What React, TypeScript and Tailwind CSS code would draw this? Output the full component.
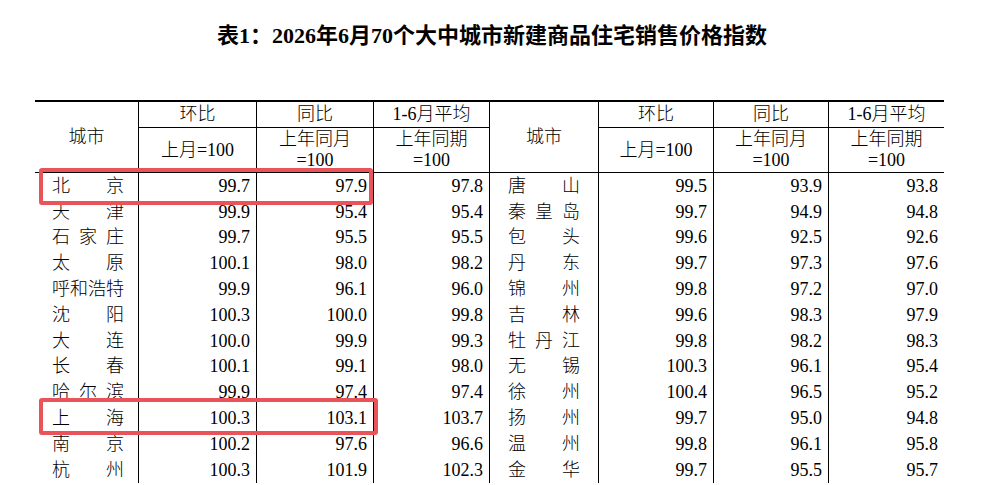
import React from "react";

const left: [string, string, string, string][] = [
  ["北京", "99.7", "97.9", "97.8"],
  ["天津", "99.9", "95.4", "95.4"],
  ["石家庄", "99.7", "95.5", "95.5"],
  ["太原", "100.1", "98.0", "98.2"],
  ["呼和浩特", "99.9", "96.1", "96.0"],
  ["沈阳", "100.3", "100.0", "99.8"],
  ["大连", "100.0", "99.9", "99.3"],
  ["长春", "100.1", "99.1", "98.0"],
  ["哈尔滨", "99.9", "97.4", "97.4"],
  ["上海", "100.3", "103.1", "103.7"],
  ["南京", "100.2", "97.6", "96.6"],
  ["杭州", "100.3", "101.9", "102.3"],
];

const right: [string, string, string, string][] = [
  ["唐山", "99.5", "93.9", "93.8"],
  ["秦皇岛", "99.7", "94.9", "94.8"],
  ["包头", "99.6", "92.5", "92.6"],
  ["丹东", "99.7", "97.3", "97.6"],
  ["锦州", "99.8", "97.2", "97.0"],
  ["吉林", "99.6", "98.3", "97.9"],
  ["牡丹江", "99.8", "98.2", "98.3"],
  ["无锡", "100.3", "96.1", "95.4"],
  ["徐州", "100.4", "96.5", "95.2"],
  ["扬州", "99.7", "95.0", "94.8"],
  ["温州", "99.8", "96.1", "95.8"],
  ["金华", "99.7", "95.5", "95.7"],
];

const font = "font-['Liberation_Serif','Noto_Sans_CJK_SC',serif]";

function City({ name, pad }: { name: string; pad: string }) {
  return (
    <div className={`flex h-full items-center ${pad}`}>
      <div className="flex w-[72px] justify-between">
        {name.split("").map((c, i) => (
          <span key={i}>{c}</span>
        ))}
      </div>
    </div>
  );
}

function Num({ v }: { v: string }) {
  return <div className="flex items-center justify-end border-l border-black pr-[6px]">{v}</div>;
}

function HeaderHalf({ first }: { first: boolean }) {
  const col = first
    ? ["col-start-1", "col-start-2", "col-start-3", "col-start-4"]
    : ["col-start-5", "col-start-6", "col-start-7", "col-start-8"];
  return (
    <>
      <div className={`${col[0]} row-span-2 row-start-1 flex items-center justify-center ${first ? "" : "border-l border-black"}`}>
        城市
      </div>
      <div className={`${col[1]} row-start-1 flex items-center justify-center border-l border-b border-black`}>环比</div>
      <div className={`${col[2]} row-start-1 flex items-center justify-center border-l border-b border-black`}>同比</div>
      <div className={`${col[3]} row-start-1 flex items-center justify-center border-l border-b border-black`}>1-6月平均</div>
      <div className={`${col[1]} row-start-2 flex items-center justify-center border-l border-black`}>上月=100</div>
      <div className={`${col[2]} row-start-2 flex flex-col items-center justify-center border-l border-black leading-[21px]`}>
        <span>上年同月</span>
        <span>=100</span>
      </div>
      <div className={`${col[3]} row-start-2 flex flex-col items-center justify-center border-l border-black leading-[21px]`}>
        <span>上年同期</span>
        <span>=100</span>
      </div>
    </>
  );
}

export default function App() {
  return (
    <div className={`h-[485px] w-[984px] overflow-hidden bg-white text-black ${font}`}>
      <div className="h-[100px] pt-[22px] text-center text-[22px] font-bold leading-[28px]">
        表1：2026年6月70个大中城市新建商品住宅销售价格指数
      </div>
      <div className="relative ml-[35px] w-[909px] text-[18px] font-light">
        <div className="grid grid-cols-[103px_118px_117px_116px_109px_115px_115px_116px] grid-rows-[26px_44px] border-t-2 border-b border-black">
          <HeaderHalf first />
          <HeaderHalf first={false} />
        </div>
        <div className="flex flex-col">
          {left.map((l, i) => {
            const r = right[i];
            return (
              <div
                key={i}
                className="grid h-[25.8px] grid-cols-[103px_118px_117px_116px_109px_115px_115px_116px] leading-none"
              >
                <City name={l[0]} pad="pl-[17px]" />
                <Num v={l[1]} />
                <Num v={l[2]} />
                <Num v={l[3]} />
                <div className="border-l border-black">
                  <City name={r[0]} pad="pl-[18px]" />
                </div>
                <Num v={r[1]} />
                <Num v={r[2]} />
                <Num v={r[3]} />
              </div>
            );
          })}
        </div>
        <div className="absolute left-[4px] top-[68px] h-[37px] w-[334px] rounded-[3px] border-4 border-[#e8545a]" />
        <div className="absolute left-[4px] top-[298px] h-[37px] w-[339px] rounded-[3px] border-4 border-[#e8545a]" />
      </div>
    </div>
  );
}
